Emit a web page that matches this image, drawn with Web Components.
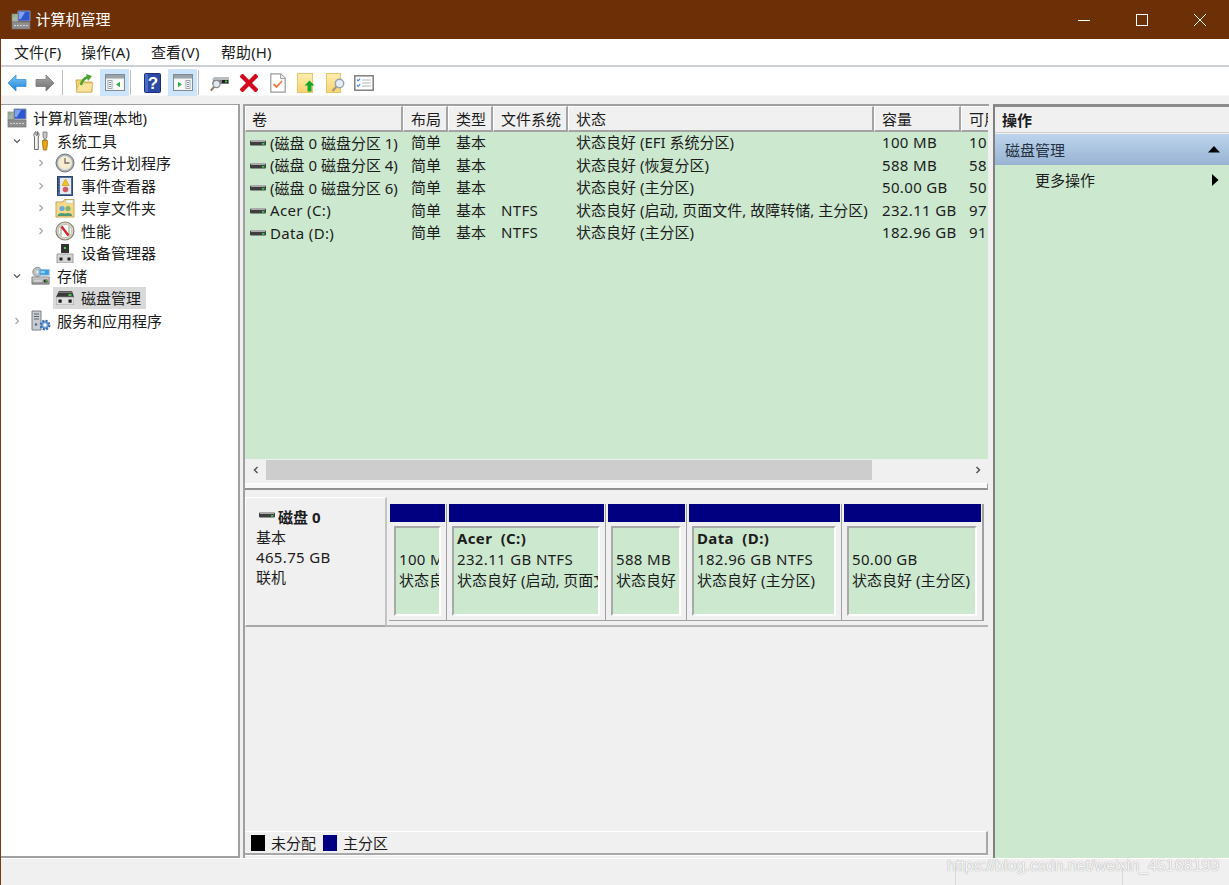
<!DOCTYPE html>
<html lang="zh-CN">
<head>
<meta charset="utf-8">
<title>计算机管理</title>
<style>
html,body{margin:0;padding:0;height:885px;overflow:hidden;background:#f0f0f0}
body{font:15px/1.2 "Noto Sans","Noto Sans CJK SC",sans-serif;color:#1c1c1c}
</style>
</head>
<body>
<mmc-window>
  <mmc-titlebar slot="title">计算机管理</mmc-titlebar>
  <mmc-menubar slot="menu"></mmc-menubar>
  <mmc-toolbar slot="tools"></mmc-toolbar>
  <mmc-tree slot="tree">
    <tree-item level="0" icon="computer">计算机管理(本地)</tree-item>
    <tree-item level="1" exp="open" icon="tools">系统工具</tree-item>
    <tree-item level="2" exp="closed" icon="clock">任务计划程序</tree-item>
    <tree-item level="2" exp="closed" icon="event">事件查看器</tree-item>
    <tree-item level="2" exp="closed" icon="share">共享文件夹</tree-item>
    <tree-item level="2" exp="closed" icon="gauge">性能</tree-item>
    <tree-item level="2" exp="none" icon="device">设备管理器</tree-item>
    <tree-item level="1" exp="open" icon="storage">存储</tree-item>
    <tree-item level="2" exp="none" icon="disk" selected>磁盘管理</tree-item>
    <tree-item level="1" exp="closed" icon="services">服务和应用程序</tree-item>
  </mmc-tree>
  <vol-table slot="table"></vol-table>
  <disk-view slot="disks"></disk-view>
  <action-pane slot="actions"></action-pane>
  <mmc-status slot="status"></mmc-status>
</mmc-window>
<script>
const defs = `
<linearGradient id="gb" x1="0" y1="0" x2="0" y2="1"><stop offset="0" stop-color="#7cc8f7"/><stop offset="1" stop-color="#1c82d6"/></linearGradient>
<linearGradient id="gg" x1="0" y1="0" x2="0" y2="1"><stop offset="0" stop-color="#a8a8a8"/><stop offset="1" stop-color="#6e6e6e"/></linearGradient>
<linearGradient id="gy" x1="0" y1="0" x2="0" y2="1"><stop offset="0" stop-color="#fdeeb0"/><stop offset="1" stop-color="#f9d36e"/></linearGradient>
<linearGradient id="gd" x1="0" y1="0" x2="0" y2="1"><stop offset="0" stop-color="#d4d4d4"/><stop offset="1" stop-color="#8c8c8c"/></linearGradient>`;
const ICONS = {
  back:[20,18,`<path d="M1 9 9 1v4.5h10v7H9V17Z" fill="url(#gb)" stroke="#3a94dc" stroke-width=".8" stroke-linejoin="round"/>`],
  fwd:[20,18,`<path d="M19 9 11 1v4.5H1v7h10V17Z" fill="url(#gg)" stroke="#777" stroke-width=".8" stroke-linejoin="round"/>`],
  up:[20,20,`<path d="M2 7h6l2 2h8v10H3Z" fill="#f2d478" stroke="#c9a94a"/><path d="M2 19 5 10h14l-2 9Z" fill="#fae39a" stroke="#d0b25a" stroke-width=".7"/><path d="M7 12C8 7 11 5 14 4" fill="none" stroke="#4aa32e" stroke-width="2.4"/><path d="M12 1l6 2-4 5Z" fill="#4aa32e"/>`],
  wtree:[20,17,`<rect x=".5" y=".5" width="19" height="16" fill="#f4f4f4" stroke="#808b94"/><rect x="1" y="1" width="18" height="3.5" fill="#9aa3aa"/><rect x="3" y="6.5" width="4" height="8" fill="#fff" stroke="#8a949c" stroke-width=".8"/><path d="M4 8.5h2M4 10.5h2M4 12.5h2" stroke="#6e8fb0"/><rect x="9" y="6.5" width="8.5" height="8" fill="#fff"/><path d="M15 7.8v5.5l-4-2.7Z" fill="#32b03c"/>`],
  wact:[20,17,`<rect x=".5" y=".5" width="19" height="16" fill="#f4f4f4" stroke="#808b94"/><rect x="1" y="1" width="18" height="3.5" fill="#9aa3aa"/><rect x="13" y="6.5" width="4" height="8" fill="#fff" stroke="#8a949c" stroke-width=".8"/><path d="M14 8.5h2M14 10.5h2M14 12.5h2" stroke="#6e8fb0"/><rect x="2.5" y="6.5" width="8.5" height="8" fill="#fff"/><path d="M5 7.8v5.5l4-2.7Z" fill="#32b03c"/>`],
  help:[17,20,`<rect x=".5" y=".5" width="16" height="19" rx="1" fill="#2a4aa6" stroke="#1b2f78"/><rect x="1" y="1" width="3" height="18" fill="#4a6cc8"/><text x="9" y="16" font-family="Liberation Sans" font-weight="bold" font-size="17" fill="#fff" text-anchor="middle">?</text>`],
  dsearch:[20,18,`<path d="M4 3h15v7H2Z" fill="#7b7f84"/><path d="M2 6 4 3h15v3Z" fill="#b9bdc2"/><rect x="12" y="6" width="6" height="3" fill="#1e1e1e"/><rect x="15" y="6.6" width="2.2" height="1.8" fill="#3fd24c"/><circle cx="6.5" cy="10" r="3.6" fill="#dfeaf2" stroke="#8b8b8b" stroke-width="1.2"/><path d="M4 13 .8 16.6" stroke="#8b7a62" stroke-width="2"/>`],
  del:[18,18,`<path d="M2.5 2.5l13 13M15.5 2.5l-13 13" stroke="#d3071d" stroke-width="4.4" stroke-linecap="square"/>`],
  doc:[16,20,`<path d="M.8.8h10l4.4 4.4v14H.8Z" fill="#fff" stroke="#9a9a9a" stroke-width="1.2"/><path d="M10.6 1v4.6h4.4" fill="#eee" stroke="#9a9a9a"/><path d="M3.5 11l3 3 5.5-6" fill="none" stroke="#ee7a3c" stroke-width="1.8"/>`],
  docup:[20,20,`<rect x=".5" y=".5" width="15" height="19" fill="url(#gy)" stroke="#e3c56c"/><path d="M12.5 7.5l5 5h-3v6h-4v-6h-3Z" fill="#17a52a"/>`],
  docfind:[20,20,`<rect x=".5" y=".5" width="14" height="19" fill="url(#gy)" stroke="#e3c56c"/><circle cx="13.5" cy="10.5" r="4.2" fill="#e6eef5" stroke="#94a3ad" stroke-width="1.4"/><path d="M10.6 13.6 6.5 18" stroke="#a99a7a" stroke-width="2.2"/>`],
  check:[20,16,`<rect x=".8" y=".8" width="18.4" height="14.4" fill="#fff" stroke="#7f7f7f" stroke-width="1.5"/><path d="M3 4.5l1.2 1.4 2-2.2M3 10l1.2 1.4 2-2.2" fill="none" stroke="#3c8de0" stroke-width="1.2"/><path d="M8 5h9M8 8h9M8 11h9" stroke="#b5b5b5" stroke-width="1.2"/>`],
  computer:[20,20,`<path d="M7 1h12v10H7Z" fill="#2f55cf"/><path d="M8 2h6l-4 7H8Z" fill="#7ea3f0"/><path d="M7 1h12v10H7Z" fill="none" stroke="#8d96a8"/><rect x="1" y="4" width="6" height="8" fill="#a9b3a9" stroke="#7d867d" stroke-width=".7"/><rect x="2" y="5.5" width="2" height="1.2" fill="#48c060"/><rect x="1" y="12" width="18" height="7" fill="#8f8f8f" stroke="#6f6f6f" stroke-width=".7"/><path d="M3 15.5h14" stroke="#d2d2d2" stroke-width="1.2" stroke-dasharray="2 1"/>`],
  tools:[20,21,`<path d="M5 1.5C3 2.5 2.2 5 3.5 7v12.5h3.8V7C8.6 5 8 2.5 6.5 1.5V5.2H5Z" fill="#f2f2f2" stroke="#6c6c6c" stroke-width="1"/><path d="M12 7V2h4v5l-1 1v2h-2V8Z" fill="#c8c8c8" stroke="#6e6e6e" stroke-width=".8"/><path d="M11.6 10.5h4.8v4l-.8 5.5h-3.2l-.8-5.5Z" fill="#e8a710" stroke="#9d6c06" stroke-width=".8"/>`],
  clock:[20,20,`<circle cx="10" cy="10" r="9" fill="#a7adb2" stroke="#70767b"/><circle cx="10" cy="10" r="6.8" fill="#f7edcc" stroke="#dfe2e4" stroke-width="1"/><path d="M10 5v5h4.5" fill="none" stroke="#6e6e6e" stroke-width="1.3"/>`],
  event:[18,20,`<rect x="1.5" y=".5" width="15" height="19" fill="#4d6fa0" stroke="#2d4670"/><rect x="4" y="2" width="11" height="16" fill="#e6e9ef"/><path d="M9.5 3l3.6 6.5H6Z" fill="#f5c518" stroke="#a88406" stroke-width=".5"/><circle cx="9.5" cy="13.5" r="2.8" fill="#cf5a6a"/><path d="M1 3h2M1 6h2M1 9h2M1 12h2M1 15h2" stroke="#1e2f4c"/>`],
  share:[20,20,`<path d="M1 4h7l1.5-2.5H19V19H1Z" fill="#f5d88a" stroke="#c8a655"/><path d="M11 2h7v3h-7Z" fill="#fff" stroke="#9cb" stroke-width=".5"/><circle cx="7" cy="10.5" r="2.6" fill="#6fa8d8"/><circle cx="13" cy="10.5" r="2.6" fill="#7bb66a"/><path d="M2.5 18c0-4 9-4 9 0ZM8.8 18c0-4 8.5-4 8.5 0Z" fill="#4e9a70"/>`],
  gauge:[20,20,`<circle cx="10" cy="10" r="9" fill="#d9d2c3" stroke="#8a8478" stroke-width="1.2"/><circle cx="10" cy="10" r="6.6" fill="#fff" stroke="#c8c2b4"/><path d="M6 5.5v9M14 5.5v9" stroke="#8fb58e" stroke-width="1.2"/><path d="M6.5 5.5 13.5 14.5" stroke="#d5202e" stroke-width="2.4"/>`],
  device:[18,20,`<path d="M5 1h8v9H5Z" fill="#343434"/><rect x="8" y="4" width="2" height="2" fill="#42d060"/><path d="M1 11h16v9H1Z" fill="#d5d5d5" stroke="#8a8a8a" stroke-width=".8"/><rect x="3.5" y="14.5" width="3" height="3" fill="#222"/><rect x="11.5" y="14.5" width="3" height="3" fill="#222"/>`],
  storage:[22,20,`<circle cx="7" cy="5.5" r="5" fill="#bcc0c3" stroke="#8a8e91"/><circle cx="7" cy="5.5" r="1.4" fill="#eee"/><rect x="9" y="3" width="11" height="6" fill="#3a9be0" stroke="#8fb8d6"/><rect x="10.5" y="4.5" width="5" height="2.5" fill="#8fd0fa"/><path d="M1 11h19v8H1Z" fill="url(#gd)" stroke="#6e6e6e" stroke-width=".8"/><rect x="14" y="14" width="4" height="3" fill="#2c2c2c"/><rect x="16" y="14.5" width="1.6" height="1.6" fill="#3dd04a"/><path d="M3 15.5h9" stroke="#f4f4f4"/>`],
  disk:[18,14,`<path d="M3 0h13l2 6H0Z" fill="#3a3a3a"/><path d="M3 .5h13v1.5H2.5Z" fill="#777"/><rect x="12.5" y="3" width="3" height="2" fill="#43c653"/><rect x="0" y="6" width="18" height="8" fill="#e0e0e0" stroke="#8a8a8a" stroke-width=".7"/><rect x="2.5" y="8.5" width="3.2" height="3.2" fill="#1d1d1d"/><rect x="12.5" y="8.5" width="3.2" height="3.2" fill="#1d1d1d"/>`],
  services:[20,21,`<path d="M1 1h9v19H1Z" fill="#c9ccd0" stroke="#6f7580" stroke-width=".9"/><path d="M3 4h5M3 6.5h5M3 9h5" stroke="#5b6470" stroke-width="1.2"/><circle cx="5" cy="14.5" r="1.2" fill="#5b6470"/><circle cx="14" cy="15" r="4.2" fill="#6fa0d8" stroke="#3e6fae" stroke-width="2.4" stroke-dasharray="2 1.3"/><circle cx="14" cy="15" r="1.7" fill="#fff"/>`],
  vol:[16,6,`<rect y=".5" width="16" height="5" rx="1" fill="#3e3e3e"/><rect x="1" y="0" width="14" height="2" fill="#a9a9a9"/><rect x="12" y="3" width="2.4" height="1.6" fill="#36d14a"/>`]
};
const SVG_DEFS = `<defs>${defs}</defs>`;
const LT = 'letter-spacing:.35px';

class AppIcon extends HTMLElement{
  connectedCallback(){
    if(this.shadowRoot) return;
    const [w,h,body]=ICONS[this.getAttribute('name')];
    this.attachShadow({mode:'open'}).innerHTML=
      `<style>:host{display:inline-flex;flex:none;align-items:center;justify-content:center}svg{display:block}</style>
       <svg width="${w}" height="${h}" viewBox="0 0 ${w} ${h}">${SVG_DEFS}${body}</svg>`;
  }
}
customElements.define('app-icon',AppIcon);

class MmcWindow extends HTMLElement{
  constructor(){super();this.attachShadow({mode:'open'}).innerHTML=`
  <style>
  :host{display:flex;flex-direction:column;height:885px;width:1229px;overflow:hidden}
  .below{flex:1;display:flex;flex-direction:column;border-left:1px solid #7a3a0c;min-height:0;background:#f0f0f0}
  .main{height:754px;margin-top:8px;display:flex}
  .left{width:239px;flex:none}
  .center{width:746px;margin-left:3px;flex:none;display:flex;flex-direction:column;border-top:2px solid #a0a0a0;border-left:2px solid #a0a0a0;box-sizing:border-box;height:754px}
  .right{margin-left:4px;flex:1;min-width:0}
  </style>
  <slot name="title"></slot>
  <div class="below">
    <slot name="menu"></slot>
    <slot name="tools"></slot>
    <div class="main">
      <div class="left"><slot name="tree"></slot></div>
      <div class="center"><slot name="table"></slot><slot name="disks"></slot></div>
      <div class="right"><slot name="actions"></slot></div>
    </div>
    <slot name="status"></slot>
  </div>`;}
}
customElements.define('mmc-window',MmcWindow);

class MmcTitlebar extends HTMLElement{
  constructor(){super();this.attachShadow({mode:'open'}).innerHTML=`
  <style>
  :host{display:flex;align-items:center;height:39px;background:#6d2f06;color:#fff;flex:none;font-size:15px}
  app-icon{margin-left:11px;margin-right:4.5px}
  .t{flex:1;padding-bottom:1px}
  .b{width:58px;height:39px;display:flex;align-items:center;justify-content:center}
  </style>
  <app-icon name="computer"></app-icon><span class="t"><slot></slot></span>
  <span class="b"><svg width="14" height="14"><path d="M1 7.5h12" stroke="#fff"/></svg></span>
  <span class="b"><svg width="14" height="14"><rect x="1.5" y="1.5" width="11" height="11" fill="none" stroke="#fff"/></svg></span>
  <span class="b"><svg width="14" height="14"><path d="M1 1l12 12M13 1 1 13" stroke="#fff"/></svg></span>`;}
}
customElements.define('mmc-titlebar',MmcTitlebar);

class MmcMenubar extends HTMLElement{
  constructor(){super();this.attachShadow({mode:'open'}).innerHTML=`
  <style>
  :host{display:flex;align-items:center;gap:20px;height:26px;padding-left:13px;background:#fff;border-bottom:2px solid #cdd0d4;flex:none}
  span{white-space:nowrap;letter-spacing:.1px}
  .w1{width:47px}.w2{width:50px}
  </style>
  <span class="w1">文件(F)</span><span class="w2">操作(A)</span><span class="w2">查看(V)</span><span class="w2">帮助(H)</span>`;}
}
customElements.define('mmc-menubar',MmcMenubar);

class MmcToolbar extends HTMLElement{
  constructor(){super();
  const b=(n,w=28,on)=>`<span class="b${on?' on':''}" style="width:${w}px"><app-icon name="${n}"></app-icon></span>`;
  const s=(l,r)=>`<span class="s" style="margin:0 ${r}px 0 ${l}px"></span>`;
  this.attachShadow({mode:'open'}).innerHTML=`
  <style>
  :host{display:flex;align-items:stretch;height:29px;padding:2px 0 0 2px;box-sizing:border-box;background:#fff;flex:none;border-bottom:1px solid #f8f8f8}
  .b{display:flex;align-items:center;justify-content:center;height:27px;box-sizing:border-box}
  .on{background:#cde5fa}
  .s{width:1px;height:25px;background:#b9bec4;align-self:center}
  </style>
  ${b('back')}${b('fwd')}${s(3,7)}${b('up')}<span style="width:2px"></span>${b('wtree',29,1)}${s(1,7)}${b('help')}<span style="width:2px"></span>${b('wact',29,1)}${s(1,7)}${b('dsearch')}${b('del',29)}${b('doc',29)}${b('docup',29)}${b('docfind',29)}${b('check',28)}`;}
}
customElements.define('mmc-toolbar',MmcToolbar);

class MmcTree extends HTMLElement{
  constructor(){super();this.attachShadow({mode:'open'}).innerHTML=`
  <style>
  :host{display:block;box-sizing:border-box;height:754px;background:#fff;border:solid #a0a0a0;border-width:1px 2px 2px 0;padding-top:2px}
  </style><slot></slot>`;}
}
customElements.define('mmc-tree',MmcTree);

class TreeItem extends HTMLElement{
  connectedCallback(){
    if(this.shadowRoot) return;
    const lvl=+this.getAttribute('level'), exp=this.getAttribute('exp'), icon=this.getAttribute('icon');
    const pad = lvl===0?4:10+24*(lvl-1);
    const ch = exp==='open'
      ? `<svg width="12" height="12"><path d="M3 4.5l3 3 3-3" fill="none" stroke="#555" stroke-width="1.2"/></svg>`
      : exp==='closed'
      ? `<svg width="12" height="12"><path d="M4.5 3l3 3-3 3" fill="none" stroke="#a6a6a6" stroke-width="1.2"/></svg>` : '';
    this.attachShadow({mode:'open'}).innerHTML=`
    <style>
    :host{display:flex;align-items:center;height:22.5px;padding-left:${pad}px}
    .e{width:12px;margin-right:6px;display:flex;flex:none}
    .g{display:flex;align-items:center;height:22px;padding:0 5px 0 2px}
    :host([selected]) .g{background:#d9d9d9}
    app-icon{width:20px;margin-right:6px}
    </style>
    ${lvl>0?`<span class="e">${ch}</span>`:''}
    <span class="g"><app-icon name="${icon}"></app-icon><span><slot></slot></span></span>`;
  }
}
customElements.define('tree-item',TreeItem);

class VolTable extends HTMLElement{
  constructor(){super();
  const cols=[158,45,45,75,306,87,27];
  const heads=['卷','布局','类型','文件系统','状态','容量','可用'];
  const rows=[
   ['(磁盘 0 磁盘分区 1)','简单','基本','','状态良好 (EFI 系统分区)','100 MB','10'],
   ['(磁盘 0 磁盘分区 4)','简单','基本','','状态良好 (恢复分区)','588 MB','58'],
   ['(磁盘 0 磁盘分区 6)','简单','基本','','状态良好 (主分区)','50.00 GB','50'],
   ['Acer (C:)','简单','基本','NTFS','状态良好 (启动, 页面文件, 故障转储, 主分区)','232.11 GB','97'],
   ['Data (D:)','简单','基本','NTFS','状态良好 (主分区)','182.96 GB','91']];
  const gtc=cols.map(c=>c+'px').join(' ');
  const isLatin=s=>/^[\x20-\x7e]+$/.test(s);
  this.attachShadow({mode:'open'}).innerHTML=`
  <style>
  :host{display:flex;flex-direction:column;height:384px;flex:none;overflow:hidden;background:#f0f0f0}
  .head,.row{display:grid;grid-template-columns:${gtc};width:743px;overflow:hidden}
  .head{height:26px;flex:none}
  .h{box-sizing:border-box;padding-left:7px;line-height:24px;background:#f0f0f0;border:solid;border-width:1px 2px 2px 1px;border-color:#fff #a4a4a4 #a4a4a4 #fff;white-space:nowrap;overflow:hidden}
  .h:first-child{padding-left:6px}
  .h:last-child{border-right:0}
  .list{height:327px;background:#cce8cf;flex:none;width:743px}
  .row{height:22.5px;line-height:21px}
  .c{padding-left:8px;white-space:nowrap;overflow:hidden}
  .c.n{padding-left:5px;display:flex;align-items:center}
  .c.n app-icon{margin-right:4px}
  .sb{height:22px;flex:none;display:flex;align-items:center;background:#f0f0f0;width:743px}
  .sb .a{width:21px;height:22px;display:flex;align-items:center;justify-content:center;flex:none}
  .sb .th{width:606px;height:20px;background:#cdcdcd}
  .sb .tr{flex:1}
  .strip{flex:1;margin-top:2px;width:743px;background:#f8f8f8;border-top:1px solid #fff;border-bottom:2px solid #909090;box-sizing:border-box;border-right:1px solid #a0a0a0}
  </style>
  <div class="head">${heads.map(h=>`<div class="h">${h}</div>`).join('')}</div>
  <div class="list">${rows.map(r=>`<div class="row">${r.map((c,i)=>{const st=isLatin(c)?` style="${LT}"`:'';return i==0?`<div class="c n"><app-icon name="vol"></app-icon><span${st}>${c}</span></div>`:`<div class="c"${st}>${c}</div>`}).join('')}</div>`).join('')}</div>
  <div class="sb"><span class="a"><svg width="8" height="10"><path d="M5.5 2 2.5 5l3 3" fill="none" stroke="#555" stroke-width="1.5"/></svg></span><span class="th"></span><span class="tr"></span><span class="a"><svg width="8" height="10"><path d="M2.5 2l3 3-3 3" fill="none" stroke="#555" stroke-width="1.5"/></svg></span></div>
  <div class="strip"></div>`;}
}
customElements.define('vol-table',VolTable);

class DiskPart extends HTMLElement{
  connectedCallback(){
    if(this.shadowRoot) return;
    const w=this.getAttribute('w');
    this.attachShadow({mode:'open'}).innerHTML=`
    <style>
    :host{display:flex;flex-direction:column;width:${w}px;flex:none;box-sizing:border-box;border-right:1px solid #a0a0a0;height:117px;border-bottom:1px solid #a0a0a0}
    :host(:first-child) .bar{margin-left:1px}
    .bar{height:18px;background:#000080;margin:0 1px 0 2px;flex:none}
    .body{flex:1;padding:4px 5px;display:flex;min-height:0}
    .in{flex:1;min-width:0;box-sizing:border-box;background:#cce8cf;border:solid 2px;border-color:#a9a9a9 #fff #fff #a9a9a9;padding:0 0 0 3px;overflow:hidden;line-height:20.5px;white-space:nowrap}
    .l{height:21px;font-weight:700;${LT}}
    .s{overflow:hidden;${LT}}
    .t{overflow:hidden}
    </style>
    <div class="bar"></div>
    <div class="body"><div class="in"><div class="l">${this.getAttribute('label')||''}</div><div class="s">${this.getAttribute('size')}</div><div class="t">${this.getAttribute('state')}</div></div></div>`;
  }
}
customElements.define('disk-part',DiskPart);

class DiskView extends HTMLElement{
  constructor(){super();this.attachShadow({mode:'open'}).innerHTML=`
  <style>
  :host{display:flex;flex-direction:column;flex:1;min-height:0;background:#f0f0f0}
  .row{display:flex;height:137px;flex:none;border-bottom:2px solid #b4b4b4;box-sizing:border-box;width:743px}
  .lab{width:142px;height:130px;margin-top:7px;box-sizing:border-box;background:#f0f0f0;border:solid;border-width:1px 2px 2px 1px;border-color:#fff #c4c4c4 #a8a8a8 #fff;padding:9px 0 0 10px;line-height:20px;flex:none}
  .name{font-weight:700;display:flex;align-items:center;height:20px}
  .name app-icon{margin:0 3px 5px 3px}
  .lt{${LT}}
  .parts{display:flex;margin:14px 0 0 2px;border-right:1px solid #a0a0a0;height:117px}
  .spacer{flex:1}
  .legend{height:24px;width:743px;box-sizing:border-box;flex:none;border-top:1px solid #fff;border-bottom:2px solid #a8a8a8;border-right:2px solid #a8a8a8;display:flex;align-items:center;padding:1px 0 0 6px}
  .sw{width:14px;height:16px;margin-right:6px;flex:none}
  .foot{height:3px;flex:none;border-top:1px solid #fff;width:743px;box-sizing:border-box}
  </style>
  <div class="row">
    <div class="lab"><div class="name"><app-icon name="vol"></app-icon>磁盘 0</div><div>基本</div><div class="lt">465.75 GB</div><div>联机</div></div>
    <div class="parts">
      <disk-part w="58" size="100 MB" state="状态良好"></disk-part>
      <disk-part w="159" label="Acer&nbsp; (C:)" size="232.11 GB NTFS" state="状态良好 (启动, 页面文"></disk-part>
      <disk-part w="81" size="588 MB" state="状态良好"></disk-part>
      <disk-part w="155" label="Data&nbsp; (D:)" size="182.96 GB NTFS" state="状态良好 (主分区)"></disk-part>
      <disk-part w="141" size="50.00 GB" state="状态良好 (主分区)"></disk-part>
    </div>
  </div>
  <div class="spacer"></div>
  <div class="legend"><span class="sw" style="background:#000"></span><span>未分配</span><span class="sw" style="background:#000080;margin-left:7px"></span><span>主分区</span></div>
  <div class="foot"></div>`;}
}
customElements.define('disk-view',DiskView);

class ActionPane extends HTMLElement{
  constructor(){super();this.attachShadow({mode:'open'}).innerHTML=`
  <style>
  :host{display:flex;flex-direction:column;height:754px;background:#cce8cf;box-sizing:border-box;border-left:2px solid #808080;border-top:3px solid #8c8c8c}
  .h{height:26px;background:#f0f0f0;border-bottom:1px solid #d0d0d0;font-weight:700;padding-left:7px;line-height:26px;flex:none;box-sizing:border-box}
  .b{height:32px;flex:none;background:linear-gradient(#bdd4ec,#98b3d2);display:flex;align-items:center;justify-content:space-between;padding:0 9px 0 10px;border-top:1px solid #f0f0f0;box-sizing:border-box;color:#23303f}
  .m{height:29px;display:flex;align-items:center;justify-content:space-between;padding:0 10px 0 40px;flex:none}
  </style>
  <div class="h">操作</div>
  <div class="b"><span>磁盘管理</span><svg width="12" height="7"><path d="M6 0 12 6.5H0Z" fill="#000"/></svg></div>
  <div class="m"><span>更多操作</span><svg width="7" height="12"><path d="M0 0 6.5 6 0 12Z" fill="#000"/></svg></div>`;}
}
customElements.define('action-pane',ActionPane);

class MmcStatus extends HTMLElement{
  constructor(){super();this.attachShadow({mode:'open'}).innerHTML=`
  <style>
  :host{display:flex;flex:1;position:relative;background:#f0f0f0;border-top:1px solid #fff;min-height:0}
  .a{width:954px;flex:none}
  .s{border-left:1px solid #d9d9d9;margin-top:6px}
  .b{width:166px;flex:none}
  .w{position:absolute;left:946px;top:-3px;font:16px/20px "Liberation Sans",sans-serif;color:rgba(255,255,255,.9);text-shadow:0 0 1px #a8a8a8,0 0 1px #bcbcbc;white-space:nowrap}
  </style>
  <span class="a"></span><span class="s b"></span><span class="s"></span>
  <span class="w">https://blog.csdn.net/weixin_45168199</span>`;}
}
customElements.define('mmc-status',MmcStatus);
</script>
</body>
</html>
